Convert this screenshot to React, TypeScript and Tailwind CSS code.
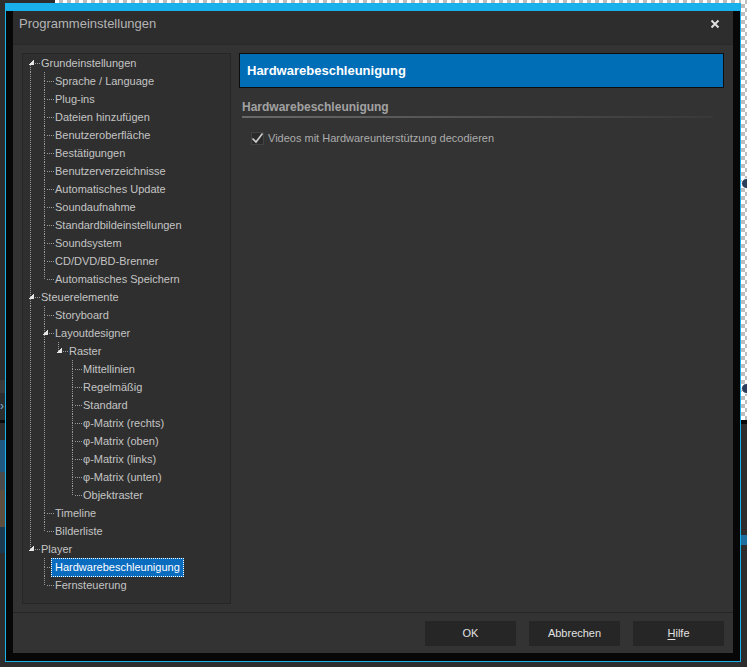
import React from 'react';

type N = { l: number; t: string; exp?: boolean; sel?: boolean };

const nodes: N[] = [
  { l: 0, t: 'Grundeinstellungen', exp: true },
  { l: 1, t: 'Sprache / Language' },
  { l: 1, t: 'Plug-ins' },
  { l: 1, t: 'Dateien hinzufügen' },
  { l: 1, t: 'Benutzeroberfläche' },
  { l: 1, t: 'Bestätigungen' },
  { l: 1, t: 'Benutzerverzeichnisse' },
  { l: 1, t: 'Automatisches Update' },
  { l: 1, t: 'Soundaufnahme' },
  { l: 1, t: 'Standardbildeinstellungen' },
  { l: 1, t: 'Soundsystem' },
  { l: 1, t: 'CD/DVD/BD-Brenner' },
  { l: 1, t: 'Automatisches Speichern' },
  { l: 0, t: 'Steuerelemente', exp: true },
  { l: 1, t: 'Storyboard' },
  { l: 1, t: 'Layoutdesigner', exp: true },
  { l: 2, t: 'Raster', exp: true },
  { l: 3, t: 'Mittellinien' },
  { l: 3, t: 'Regelmäßig' },
  { l: 3, t: 'Standard' },
  { l: 3, t: 'φ-Matrix (rechts)' },
  { l: 3, t: 'φ-Matrix (oben)' },
  { l: 3, t: 'φ-Matrix (links)' },
  { l: 3, t: 'φ-Matrix (unten)' },
  { l: 3, t: 'Objektraster' },
  { l: 1, t: 'Timeline' },
  { l: 1, t: 'Bilderliste' },
  { l: 0, t: 'Player', exp: true },
  { l: 1, t: 'Hardwarebeschleunigung', sel: true },
  { l: 1, t: 'Fernsteuerung' },
];

function cont(i: number, k: number) {
  for (let j = i + 1; j < nodes.length; j++) {
    if (nodes[j].l <= k) return nodes[j].l === k;
  }
  return false;
}

const DOT = '#9a9a9a';

function Guides({ i }: { i: number }) {
  const n = nodes[i];
  const L = n.l;
  const w = 14 + 14 * L;
  const parts: React.ReactNode[] = [];
  for (let k = 0; k < L; k++) {
    if (cont(i, k)) {
      const x = 7.5 + 14 * k;
      parts.push(<line key={'v' + k} x1={x} y1={0} x2={x} y2={18} stroke={DOT} strokeDasharray="1 1" />);
    }
  }
  const x = 7.5 + 14 * L;
  if (i > 0) parts.push(<line key="t" x1={x} y1={0} x2={x} y2={9} stroke={DOT} strokeDasharray="1 1" />);
  if (cont(i, L)) parts.push(<line key="b" x1={x} y1={9} x2={x} y2={18} stroke={DOT} strokeDasharray="1 1" />);
  parts.push(<line key="h" x1={x + 2.5} y1={9.5} x2={x + 9.5} y2={9.5} stroke={DOT} strokeDasharray="1 1" />);
  if (n.exp) {
    const bx = 14 * L;
    parts.push(<polygon key="e" points={`${bx + 5},11 ${bx + 11},11 ${bx + 11},5`} fill="#e6e6e6" />);
  }
  return (
    <svg width={w} height={18} className="shrink-0 overflow-visible" shapeRendering="crispEdges">
      {parts}
    </svg>
  );
}

export default function App() {
  return (
    <div className="relative w-[747px] h-[667px] bg-[#2d2d2d] overflow-hidden font-['Liberation_Sans','Arial',sans-serif]">
      {/* desktop behind the window */}
      <div className="absolute left-[55px] top-0 w-[692px] h-[3px] bg-[image:repeating-conic-gradient(#bdbdbd_0_25%,#ffffff_0_50%)] bg-[length:8px_8px]" />
      <div className="absolute left-[741px] top-0 w-[6px] h-[420px] bg-[image:repeating-conic-gradient(#bdbdbd_0_25%,#ffffff_0_50%)] bg-[length:8px_8px]" />
      <div className="absolute left-[741px] top-[420px] w-[6px] h-[4px] bg-[#0a0a0a]" />
      <div className="absolute left-[741px] top-[535px] w-[6px] h-[10px] bg-[#1c6fa0]" />
      <div className="absolute left-[741px] top-[178px] w-[11px] h-[11px] rounded-full bg-[#2c3e5c] border border-white" />
      <div className="absolute left-[741px] top-[383px] w-[11px] h-[11px] rounded-full bg-[#2c3e5c] border border-white" />
      <div className="absolute left-0 top-[380px] w-[5px] h-[13px] bg-[#3a3a3a]" />
      <div className="absolute left-0 top-[396px] w-[5px] h-[20px] text-[#7fb2d6] text-[12px] leading-[20px]">›</div>
      <div className="absolute left-0 top-[420px] w-[5px] h-[3px] bg-[#0a0a0a]" />
      <div className="absolute left-0 top-[440px] w-[5px] h-[32px] bg-[#1f5880]" />
      <div className="absolute left-0 top-[472px] w-[5px] h-[18px] bg-[#4a4a4a]" />
      <div className="absolute left-0 top-[490px] w-[5px] h-[37px] bg-[#5c4e3e]" />
      <div className="absolute left-0 top-[527px] w-[5px] h-[26px] bg-[#1b3a50]" />

      {/* window */}
      <div className="absolute left-[5px] top-[3px] w-[736px] h-[659px] border-[#1ab0ec] border-t-[8px] border-x border-b bg-[#070707] px-[7px] pb-[8px]">
        <div className="w-[720px] h-[642px] flex flex-col bg-[#333333]">
          {/* title bar */}
          <div className="h-[34px] shrink-0 bg-[#2d2d2d] flex items-center justify-between pl-[6px] pr-[13px] pb-[7px] border-b border-[#282828]">
            <span className="text-[13px] text-[#b4b4b4]">Programmeinstellungen</span>
            <svg width="10" height="10" viewBox="0 0 10 10">
              <path d="M1.5 1.5 L8.5 8.5 M8.5 1.5 L1.5 8.5" stroke="#dedede" strokeWidth="2" />
            </svg>
          </div>
          {/* body */}
          <div className="flex-1 flex gap-[8px] pl-[9px] pr-[9px] pt-[8px] pb-[8px] border-b border-[#262626]">
            <div className="w-[209px] shrink-0 bg-[#2f2f2f] border border-[#262626]">
              {nodes.map((n, i) => (
                <div key={i} className="h-[18px] flex items-center">
                  <Guides i={i} />
                  {n.sel ? (
                    <span className="h-[19px] flex items-center px-[3px] bg-[#0a6cbf] border border-dotted border-white text-white text-[11px] leading-none whitespace-nowrap">
                      {n.t}
                    </span>
                  ) : (
                    <span className="pl-[4px] text-[#c4c4c4] text-[11px] leading-none whitespace-nowrap">{n.t}</span>
                  )}
                </div>
              ))}
            </div>
            <div className="flex-1 flex flex-col">
              <div className="h-[35px] bg-[#006db7] border border-[#0d0d0d] flex items-center pl-[7px]">
                <span className="text-white font-bold text-[13px]">Hardwarebeschleunigung</span>
              </div>
              <div className="pl-[3px] pr-[11px]">
                <div className="mt-[11px] h-[16px] flex items-center text-[12px] font-bold text-[#a2a2a2]">Hardwarebeschleunigung</div>
                <div className="mt-[1px] h-[2px] bg-gradient-to-r from-[#6a6a6a] to-[#383838]" />
                <div className="mt-[12px] ml-[9px] flex items-center gap-[4px]">
                  <div className="w-[13px] h-[13px] bg-[#2b2b2b] border border-[#424242] flex items-center justify-center">
                    <svg width="13" height="13" viewBox="0 0 13 13" className="overflow-visible">
                      <path d="M1.5 6.5 L5 10 L11.5 1.5" stroke="#cfcfcf" strokeWidth="1.6" fill="none" />
                    </svg>
                  </div>
                  <span className="text-[11px] text-[#acacac]">Videos mit Hardwareunterstützung decodieren</span>
                </div>
              </div>
            </div>
          </div>
          {/* footer */}
          <div className="h-[40px] shrink-0 flex justify-end items-start gap-[13px] pt-[8px] pr-[9px]">
            <button className="w-[91px] h-[25px] bg-[#262626] text-[#e2e2e2] text-[11px]">OK</button>
            <button className="w-[91px] h-[25px] bg-[#262626] text-[#e2e2e2] text-[11px]">Abbrechen</button>
            <button className="w-[91px] h-[25px] bg-[#262626] text-[#e2e2e2] text-[11px]"><span className="underline underline-offset-2">H</span>ilfe</button>
          </div>
        </div>
      </div>
    </div>
  );
}
